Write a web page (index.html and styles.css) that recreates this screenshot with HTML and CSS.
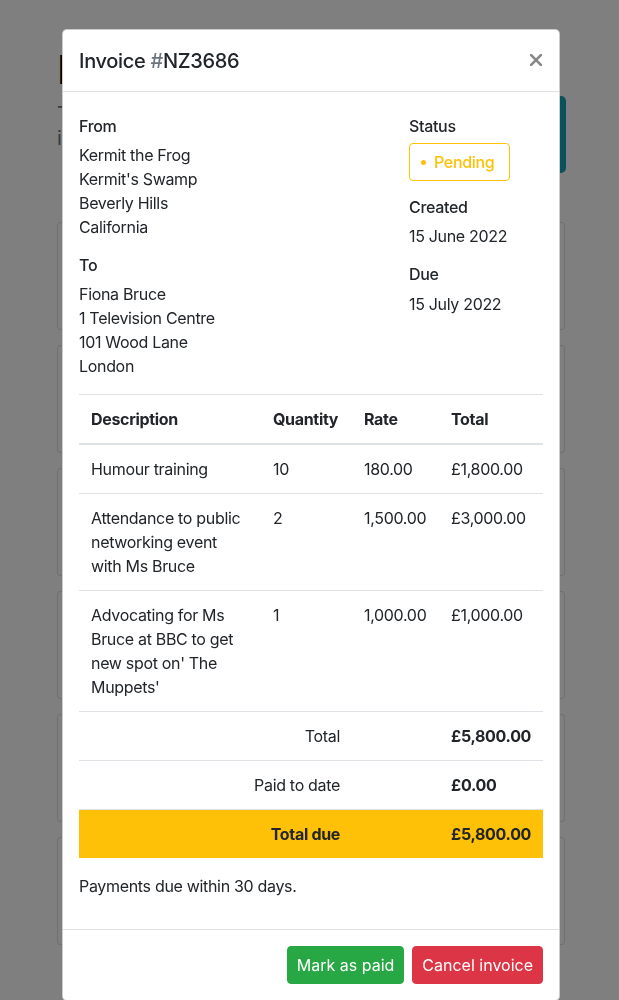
FILE: index.html
```html
<!DOCTYPE html>
<html lang="en">
<head>
<meta charset="utf-8">
<title>Invoice #NZ3686</title>
<link rel="stylesheet" href="styles.css">
</head>
<body>
<div class="page">
  <h1 class="page-title">Invoices</h1>
  <div class="page-intro">
    <p class="lead">These are your invoices<br>in one place.</p>
    <button class="btn-teal" type="button">New<br>invoice</button>
  </div>
  <div class="card-list">
    <div class="card"></div>
    <div class="card"></div>
    <div class="card"></div>
    <div class="card"></div>
    <div class="card"></div>
    <div class="card"></div>
  </div>
</div>

<div class="backdrop"></div>

<div class="modal" role="dialog">
  <div class="modal-header">
    <h5 class="modal-title">Invoice <span class="muted">#</span>NZ3686</h5>
    <button class="close" type="button" aria-label="Close">
      <svg width="12" height="12" viewBox="0 0 12 12"><path d="M1.2 1.2 L10.8 10.8 M10.8 1.2 L1.2 10.8" stroke="#878787" stroke-width="2.6" stroke-linecap="square"/></svg>
    </button>
  </div>
  <div class="modal-body">
    <div class="parties">
      <div class="col-main">
        <h6 class="label">From</h6>
        <address class="addr">Kermit the Frog<br>Kermit's Swamp<br>Beverly Hills<br>California</address>
        <h6 class="label">To</h6>
        <address class="addr">Fiona Bruce<br>1 Television Centre<br>101 Wood Lane<br>London</address>
      </div>
      <div class="col-side">
        <h6 class="label">Status</h6>
        <div class="status"><span class="dot"></span>Pending</div>
        <h6 class="label">Created</h6>
        <p class="value">15 June 2022</p>
        <h6 class="label">Due</h6>
        <p class="value">15 July 2022</p>
      </div>
    </div>

    <table class="items">
      <colgroup>
        <col class="c-desc"><col class="c-qty"><col class="c-rate"><col class="c-total">
      </colgroup>
      <thead>
        <tr><th>Description</th><th>Quantity</th><th>Rate</th><th>Total</th></tr>
      </thead>
      <tbody>
        <tr><td>Humour training</td><td>10</td><td>180.00</td><td>£1,800.00</td></tr>
        <tr><td>Attendance to public networking event with Ms Bruce</td><td>2</td><td>1,500.00</td><td>£3,000.00</td></tr>
        <tr><td>Advocating for Ms Bruce at BBC to get new spot on' The Muppets'</td><td>1</td><td>1,000.00</td><td>£1,000.00</td></tr>
      </tbody>
      <tfoot>
        <tr><td colspan="2" class="right">Total</td><td></td><td class="strong">£5,800.00</td></tr>
        <tr><td colspan="2" class="right">Paid to date</td><td></td><td class="strong">£0.00</td></tr>
        <tr class="due"><td colspan="2" class="right strong">Total due</td><td></td><td class="strong">£5,800.00</td></tr>
      </tfoot>
    </table>

    <p class="terms">Payments due within 30 days.</p>
  </div>
  <div class="modal-footer">
    <button class="btn btn-success" type="button">Mark as paid</button>
    <button class="btn btn-danger" type="button">Cancel invoice</button>
  </div>
</div>
</body>
</html>
```
FILE: styles.css
```css
* { box-sizing: border-box; }

html, body {
  margin: 0;
  padding: 0;
}

body {
  font-family: Inter, "Noto Sans", "Liberation Sans", sans-serif;
  font-size: 16px;
  line-height: 24px;
  letter-spacing: -0.02em;
  color: #212529;
  background: #fff;
  height: 1000px;
  overflow: hidden;
}

/* ---------- background page ---------- */
.page {
  padding: 46px 53px 0 57px;
}

.page-title {
  margin: 0;
  font-size: 40px;
  line-height: 48px;
  font-weight: 500;
  color: #000;
}

.page-intro {
  display: flex;
  justify-content: space-between;
  align-items: flex-start;
}

.lead {
  margin: 8px 0 0;
  font-size: 20px;
  line-height: 24px;
  color: #6c757d;
}

.btn-teal {
  margin-top: 2px;
  width: 160px;
  height: 77px;
  border: 0;
  border-radius: 5px;
  background: #17a2b8;
  color: #fff;
  font: inherit;
  font-size: 20px;
}

.card-list {
  margin-top: 49px;
  display: flex;
  flex-direction: column;
  gap: 15px;
  padding-right: 1px;
}

.card {
  height: 108px;
  border: 1px solid rgba(0, 0, 0, 0.125);
  border-radius: 4px;
  background: #fff;
}

.backdrop {
  position: fixed;
  inset: 0;
  background: rgba(0, 0, 0, 0.5);
}

/* ---------- modal ---------- */
.modal {
  position: absolute;
  top: 29px;
  left: 62px;
  width: 498px;
  background: #fff;
  border: 1px solid rgba(0, 0, 0, 0.2);
  border-radius: 5px;
}

.modal-header {
  display: flex;
  align-items: flex-start;
  justify-content: space-between;
  padding: 16px 16px 15px;
  border-bottom: 1px solid #dee2e6;
}

.modal-title {
  margin: 0;
  font-size: 20px;
  line-height: 30px;
  font-weight: 500;
}

.muted { color: #6c757d; }

.close {
  display: flex;
  align-items: center;
  justify-content: center;
  margin: 8px 1px 0 0;
  padding: 0;
  width: 12px;
  height: 12px;
  border: 0;
  background: none;
}

.modal-body {
  padding: 16px;
}

.parties {
  display: flex;
  padding-top: 8px;
}

.col-main {
  width: 330px;
}

.col-side {
  flex: 1;
}

.label {
  margin: 0 0 7px;
  padding-top: 1px;
  font-size: 16px;
  line-height: 19.2px;
  font-weight: 500;
}

.addr {
  margin: 0 0 16px;
  font-style: normal;
}

.value {
  margin: 0 0 16px;
}

.status {
  display: inline-flex;
  align-items: center;
  height: 38px;
  width: 101px;
  padding: 0 0 0 11px;
  margin-bottom: 16px;
  border: 1px solid #ffc107;
  border-radius: 4px;
  color: #ffc107;
  font-weight: 500;
  font-size: 16px;
}

.dot {
  width: 5px;
  height: 5px;
  border-radius: 50%;
  background: #ffc107;
  margin-right: 8px;
}

/* ---------- table ---------- */
.items {
  width: 100%;
  border-collapse: collapse;
  table-layout: fixed;
  margin-bottom: 16px;
}

.c-desc { width: 182px; }
.c-qty { width: 91px; }
.c-rate { width: 87px; }
.c-total { width: 104px; }

.items th,
.items td {
  padding: 12px;
  text-align: left;
  vertical-align: top;
  border-top: 1px solid #dee2e6;
}

.items th {
  font-weight: 700;
  border-bottom: 2px solid #dee2e6;
}

.items .right { text-align: right; }
.items .strong { font-weight: 700; }

.items .due td {
  background: #ffc107;
}

.terms {
  margin: 0 0 15px;
}

/* ---------- footer ---------- */
.modal-footer {
  display: flex;
  justify-content: flex-end;
  padding: 12px;
  border-top: 1px solid #dee2e6;
}

.btn {
  margin: 4px;
  padding: 6px 9px;
  font: inherit;
  font-size: 16px;
  line-height: 24px;
  border: 1px solid transparent;
  border-radius: 4px;
  color: #fff;
}

.btn-success {
  background: #28a745;
  border-color: #28a745;
}

.btn-danger {
  background: #dc3545;
  border-color: #dc3545;
}
```
